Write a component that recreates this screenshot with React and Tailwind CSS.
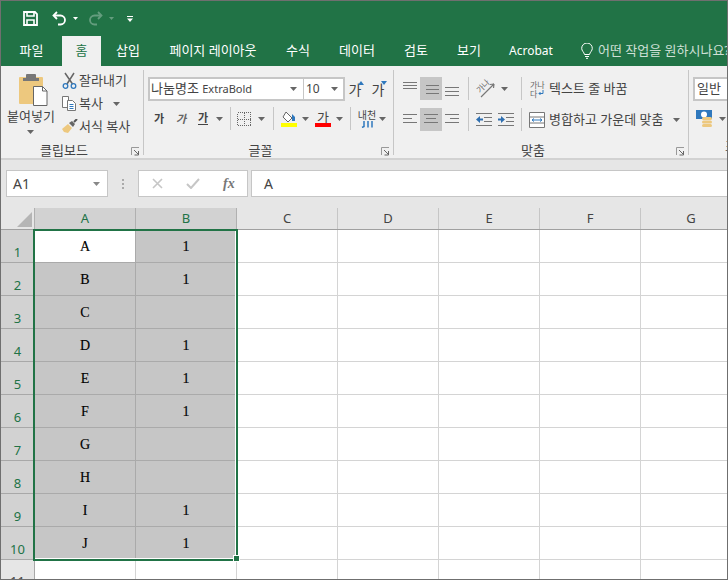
import React from "react";

const GREEN = "#217346";

const rows = [
  ["A", "1"],
  ["B", "1"],
  ["C", ""],
  ["D", "1"],
  ["E", "1"],
  ["F", "1"],
  ["G", ""],
  ["H", ""],
  ["I", "1"],
  ["J", "1"],
];

function Caret({ className = "" }) {
  return (
    <svg width="7" height="4" viewBox="0 0 7 4" className={"shrink-0 " + className}>
      <path d="M0 0h7L3.500 4z" fill="#666" />
    </svg>
  );
}

function Launcher() {
  return (
    <svg width="9" height="9" viewBox="0 0 9 9" className="shrink-0">
      <path d="M.5 8V.5H8" fill="none" stroke="#999" />
      <path d="M3 3l4 4M7.500 4v4h-4" fill="none" stroke="#666" />
    </svg>
  );
}

function Lines({ y, x }) {
  return (
    <svg width="16" height="16" viewBox="0 0 16 16" className="shrink-0">
      {y.map((v, i) => (
        <rect key={i} x={x[i]} y={v} width={x[i + 3]} height="1" fill="#777" />
      ))}
    </svg>
  );
}

function AlignCell({ active, w, lines, mt = "mt-0" }) {
  return (
    <div
      className={
        "flex h-[23px] items-center justify-center " +
        (active ? "bg-[#c6c6c6] " : "") +
        (w === 23 ? "w-[23px]" : "w-[22px]")
      }
    >
      <div className={mt}>
        <Lines y={lines.y} x={lines.x} />
      </div>
    </div>
  );
}

function VSep({ h = "h-[23px]", mx = "mx-0" }) {
  return <div className={"w-px shrink-0 bg-[#c6c6c6] " + h + " " + mx} />;
}

function Indent({ flip }) {
  return (
    <svg width="16" height="13" viewBox="0 0 16 13" className="shrink-0">
      <rect x="0" y="0" width="16" height="1" fill="#777" />
      <rect x="8" y="4" width="8" height="1" fill="#777" />
      <rect x="8" y="8" width="8" height="1" fill="#777" />
      <rect x="0" y="12" width="16" height="1" fill="#777" />
      <path d={flip ? "M0 5.500h3V3l4 3.500L3 10V7.500H0z" : "M7 5.500H4V3L0 6.500 4 10V7.500h3z"} fill="#2f6fb0" />
    </svg>
  );
}

function RibbonLabel({ children, className = "" }) {
  return (
    <div className={"-mb-[5px] mt-auto flex h-[18px] items-center pr-[3px] text-[13px] text-[#444] " + className}>
      <div className="mr-[4px] flex-1 text-center">{children}</div>
      <Launcher />
    </div>
  );
}

function ClipRow({ icon, label, caret }) {
  return (
    <div className="flex h-[23px] items-center text-[13px] text-[#444]">
      <div className="flex w-[19px] justify-center">{icon}</div>
      <span>{label}</span>
      {caret && <Caret className="ml-[10px]" />}
    </div>
  );
}

function Clipboard() {
  return (
    <div className="flex h-[85px] w-[143px] shrink-0 flex-col border-r border-[#c6c6c6]">
      <div className="flex pl-[6px]">
        <div className="flex w-[54px] flex-col text-[13px] text-[#444]">
          <svg width="30" height="32" viewBox="0 0 30 32" className="ml-[12px] mt-[4px]">
            <rect x="0" y="3" width="24" height="27" rx="1" fill="#edc87e" />
            <rect x="7" y="0" width="10" height="6" rx="1" fill="#777" />
            <rect x="4" y="4" width="16" height="3" fill="#777" />
            <path d="M14.500 12.500h9l4.500 4.500v14.500H14.500z" fill="#fff" stroke="#666" />
            <path d="M23.500 12.500v4.500H28" fill="none" stroke="#666" />
          </svg>
          <span className="leading-[20px]">붙여넣기</span>
          <Caret className="ml-[20px] mt-[4px]" />
        </div>
        <div className="-ml-[1px] -mt-[1px] flex flex-col">
          <ClipRow
            label="잘라내기"
            icon={
              <svg width="16" height="17" viewBox="0 0 16 17">
                <path d="M3 1l7.500 11M12 1L5 12" fill="none" stroke="#666" strokeWidth="1.500" />
                <circle cx="3.500" cy="14" r="2.300" fill="none" stroke="#2f78bd" strokeWidth="1.300" />
                <circle cx="11.500" cy="14" r="2.300" fill="none" stroke="#2f78bd" strokeWidth="1.300" />
              </svg>
            }
          />
          <ClipRow
            label="복사"
            caret
            icon={
              <svg width="15" height="15" viewBox="0 0 15 15">
                <path d="M.5.500h6v11h-6z" fill="#fff" stroke="#777" />
                <path d="M5.500 4.500h5l3 3v7h-8z" fill="#fff" stroke="#777" />
                <path d="M7.500 8.500h4M7.500 10.500h4M7.500 12.500h4" stroke="#2f78bd" />
              </svg>
            }
          />
          <ClipRow
            label="서식 복사"
            icon={
              <svg width="17" height="15" viewBox="0 0 17 15">
                <path d="M1 10l6-5 4 4-4 5-4-1z" fill="#edc87e" />
                <path d="M8 4l3-2 3 3-2 3z" fill="#666" />
                <path d="M13 3l3-3" stroke="#555" strokeWidth="2" />
              </svg>
            }
          />
        </div>
      </div>
      <RibbonLabel>클립보드</RibbonLabel>
    </div>
  );
}

function KoCell({ extra = "", children }) {
  return (
    <div className="flex w-[22px] shrink-0 justify-center">
      <span className={"text-[11px] leading-none text-[#444] " + extra}>{children}</span>
    </div>
  );
}

function FontGroup() {
  return (
    <div className="flex h-[85px] w-[250px] shrink-0 flex-col border-r border-[#c6c6c6] pl-[4px] pt-[7px]">
      <div className="flex h-[24px] items-center">
        <div className="flex h-[24px] w-[157px] shrink-0 items-center justify-between border-2 border-[#c6c6c6] bg-white pl-[1px] pr-[6px] text-[13px] text-[#444]">
          <span className="whitespace-nowrap">
            나눔명조 <span className="text-[11px]">ExtraBold</span>
          </span>
          <Caret />
        </div>
        <div className="-ml-[1px] flex h-[24px] w-[41px] shrink-0 items-center justify-between border-2 border-l-0 border-[#c6c6c6] bg-white pl-[2px] pr-[5px] text-[12px] text-[#444]">
          <span>10</span>
          <Caret />
        </div>
        <div className="flex w-[23px] shrink-0 items-start justify-center">
          <span className="mt-[2px] text-[14px] leading-none text-[#444]">가</span>
          <svg width="6" height="4" viewBox="0 0 6 4" className="-ml-[3px]">
            <path d="M3 0l3 4H0z" fill="#2f78bd" />
          </svg>
        </div>
        <div className="flex w-[23px] shrink-0 items-start justify-center">
          <span className="mt-[2px] text-[14px] leading-none text-[#444]">가</span>
          <svg width="6" height="4" viewBox="0 0 6 4" className="-ml-[3px]">
            <path d="M3 4l3-4H0z" fill="#2f78bd" />
          </svg>
        </div>
      </div>
      <div className="mt-[6px] flex h-[23px] items-center">
        <KoCell extra="font-bold">가</KoCell>
        <KoCell extra="italic font-bold text-[#666]">가</KoCell>
        <KoCell extra="border-b border-[#444] pb-[1px] font-bold">가</KoCell>
        <Caret className="ml-[2px]" />
        <VSep mx="ml-[7px]" />
        <svg width="14" height="14" viewBox="0 0 14 14" shapeRendering="crispEdges" className="ml-[6px] shrink-0">
          <path
            d="M.5.500h13v13H.500zM7.500 .5v13M.5 7.500h13"
            fill="none"
            stroke="#666"
            strokeDasharray="1 1"
          />
        </svg>
        <Caret className="ml-[7px]" />
        <VSep mx="ml-[8px]" />
        <div className="ml-[7px] flex w-[16px] shrink-0 flex-col items-center">
          <svg width="16" height="12" viewBox="0 0 16 12">
            <path d="M5 1l6 6-4 4-5-5z" fill="#fff" stroke="#666" />
            <path d="M11 3l3 3v4h-3z" fill="#2f78bd" />
          </svg>
          <div className="h-[4px] w-[16px] bg-[#ffff00]" />
        </div>
        <Caret className="ml-[5px]" />
        <div className="ml-[6px] flex w-[16px] shrink-0 flex-col items-center">
          <span className="text-[13px] leading-[12px] text-[#444]">가</span>
          <div className="h-[4px] w-[16px] bg-[#ff0000]" />
        </div>
        <Caret className="ml-[5px]" />
        <VSep mx="ml-[7px]" />
        <div className="ml-[5px] flex w-[22px] shrink-0 flex-col items-center leading-none">
          <span className="text-[10px] leading-[11px] text-[#444]">내천</span>
          <svg width="13" height="7" viewBox="0 0 13 7">
            <path d="M3 0v5.500L1 6.500M7 0v6.500M11 0v6.500" fill="none" stroke="#2f78bd" strokeWidth="1.500" />
          </svg>
        </div>
        <Caret className="ml-[1px]" />
      </div>
      <RibbonLabel className="-ml-[4px]">글꼴</RibbonLabel>
    </div>
  );
}

function AlignGroup() {
  return (
    <div className="flex h-[85px] w-[295px] shrink-0 flex-col border-r border-[#c6c6c6] pl-[3px] pt-[7px]">
      <div className="flex h-[23px]">
        <AlignCell w={23} mt="-mt-[5px]" lines={{ y: [4, 7, 10], x: [2, 2, 2, 14, 14, 14] }} />
        <AlignCell active w={22} lines={{ y: [4, 8, 12], x: [3, 3, 3, 14, 14, 14] }} />
        <AlignCell w={22} mt="mt-[5px]" lines={{ y: [4, 8, 12], x: [0, 0, 0, 14, 14, 14] }} />
        <VSep mx="ml-[4px]" />
        <div className="flex w-[52px] shrink-0 items-center pl-[6px]">
          <svg width="25" height="22" viewBox="0 0 25 22">
            <text x="3" y="13" fontSize="8" fill="#666" transform="rotate(-45 7 12)">
              가나
            </text>
            <path d="M6 19L19 6M19 6l-4 .5M19 6l-.5 4" fill="none" stroke="#777" strokeWidth="1.200" />
          </svg>
          <Caret className="ml-[1px]" />
        </div>
        <VSep />
        <div className="flex items-center pl-[8px] text-[13px] text-[#444]">
          <div className="mr-[4px] w-[15px] text-[8px] leading-[9px] text-[#666]">
            <div>가나</div>
            <div className="flex items-center">
              다
              <svg width="6" height="6" viewBox="0 0 6 6" className="ml-[1px]">
                <path d="M5 0v3.500H1M2.500 2L1 3.500 2.500 5" fill="none" stroke="#2f78bd" />
              </svg>
            </div>
          </div>
          <span className="whitespace-nowrap">텍스트 줄 바꿈</span>
        </div>
      </div>
      <div className="mt-[8px] flex h-[23px]">
        <AlignCell w={23} lines={{ y: [2, 6, 10], x: [2, 2, 2, 14, 9, 14] }} />
        <AlignCell active w={22} lines={{ y: [2, 6, 10], x: [1, 3, 1, 14, 10, 14] }} />
        <AlignCell w={22} lines={{ y: [2, 6, 10], x: [0, 5, 0, 14, 9, 14] }} />
        <VSep mx="ml-[4px]" />
        <div className="flex w-[52px] shrink-0 items-center pl-[7px]">
          <Indent />
          <div className="ml-[6px]">
            <Indent flip />
          </div>
        </div>
        <VSep />
        <div className="flex items-center pl-[7px] text-[13px] text-[#444]">
          <svg width="16" height="16" viewBox="0 0 16 16" className="mr-[4px] shrink-0">
            <path d="M.5.500h15v15H.500zM.5 5h15M.5 11h15" fill="#fff" stroke="#777" />
            <path d="M3 8h10M3 8l2-1.500M3 8l2 1.500M13 8l-2-1.500M13 8l-2 1.500" fill="none" stroke="#2f78bd" />
          </svg>
          <span className="whitespace-nowrap">병합하고 가운데 맞춤</span>
          <Caret className="ml-[10px]" />
        </div>
      </div>
      <RibbonLabel className="-ml-[3px]">맞춤</RibbonLabel>
    </div>
  );
}

function NumberGroup() {
  return (
    <div className="flex h-[85px] min-w-0 flex-1 flex-col overflow-hidden pl-[4px] pt-[7px]">
      <div className="flex h-[24px] shrink-0 items-center border-y-2 border-l-2 border-[#c6c6c6] bg-white pl-[2px] text-[13px] text-[#444]">
        일반
      </div>
      <div className="mt-[9px] flex items-center pl-[3px]">
        <svg width="17" height="17" viewBox="0 0 17 17">
          <rect x="0" y="0" width="16" height="9" fill="#2f78bd" />
          <circle cx="8" cy="4.500" r="3" fill="#fff" />
          <rect x="6" y="7" width="10" height="3" rx="1.500" fill="#edc87e" />
          <rect x="6" y="10.500" width="10" height="3" rx="1.500" fill="#edc87e" />
          <rect x="6" y="14" width="10" height="3" rx="1.500" fill="#edc87e" />
        </svg>
        <Caret className="ml-[6px]" />
      </div>
      <div className="mt-auto h-[18px] whitespace-nowrap pl-[32px] text-[13px] text-[#444]">표시 형식</div>
    </div>
  );
}

function Ribbon() {
  return (
    <div className="flex h-[94px] border-b-2 border-[#d2d2d2] bg-[#f0f0f0] pt-[4px]">
      <Clipboard />
      <FontGroup />
      <AlignGroup />
      <NumberGroup />
    </div>
  );
}

function TitleBar() {
  return (
    <div className="flex h-[35px] items-center pl-[22px]" style={{ backgroundColor: GREEN }}>
      <svg width="15" height="15" viewBox="0 0 15 15">
        <path d="M1 1h11l2 2v11H1z" fill="none" stroke="#fff" strokeWidth="1.800" />
        <path d="M4 1h7v4H4zM4 9h7v5H4z" fill="none" stroke="#fff" strokeWidth="1.600" />
      </svg>
      <svg width="15" height="15" viewBox="0 0 15 15" className="ml-[14px]">
        <path d="M5 1L1.500 4.500 5 8" fill="none" stroke="#fff" strokeWidth="1.800" />
        <path d="M2 4.500h6.500a4 4 0 0 1 0 9H6" fill="none" stroke="#fff" strokeWidth="1.800" />
      </svg>
      <svg width="5" height="3" viewBox="0 0 5 3" className="ml-[6px]">
        <path d="M0 0h5L2.500 3z" fill="#fff" />
      </svg>
      <svg width="15" height="15" viewBox="0 0 15 15" className="ml-[10px] opacity-30">
        <path d="M10 1l3.500 3.500L10 8" fill="none" stroke="#fff" strokeWidth="1.800" />
        <path d="M13 4.500H6.500a4 4 0 0 0 0 9H9" fill="none" stroke="#fff" strokeWidth="1.800" />
      </svg>
      <svg width="5" height="3" viewBox="0 0 5 3" className="ml-[6px] opacity-30">
        <path d="M0 0h5L2.500 3z" fill="#fff" />
      </svg>
      <svg width="6" height="6" viewBox="0 0 6 6" className="ml-[13px]">
        <path d="M0 0h6v1H0zM0 2.500h6L3 6z" fill="#fff" />
      </svg>
    </div>
  );
}

const tabs = [
  ["파일", "w-[61px]"],
  ["홈", "w-[39px]"],
  ["삽입", "w-[54px]"],
  ["페이지 레이아웃", "w-[116px]"],
  ["수식", "w-[54px]"],
  ["데이터", "w-[64px]"],
  ["검토", "w-[54px]"],
  ["보기", "w-[52px]"],
  ["Acrobat", "w-[72px] text-[12px]"],
];

function TabBar() {
  return (
    <div className="flex h-[30px] overflow-hidden text-[13px]" style={{ backgroundColor: GREEN }}>
      {tabs.map(([name, w]) => (
        <div
          key={name}
          className={
            "flex shrink-0 items-center justify-center " +
            w +
            (name === "홈" ? " bg-[#f0f0f0] text-[#217346]" : " text-white")
          }
        >
          {name}
        </div>
      ))}
      <div className="flex shrink-0 items-center whitespace-nowrap pl-[14px] text-[#cfe0d6]">
        <svg width="12" height="16" viewBox="0 0 12 16" className="mr-[5px]">
          <path
            d="M3.500 11.500C3 9 .7 8 .7 5.300a5.300 5.300 0 0 1 10.600 0C11.300 8 9 9 8.500 11.500zM4 13.500h4M5 15.300h2"
            fill="none"
            stroke="#fff"
          />
        </svg>
        어떤 작업을 원하시나요?
      </div>
    </div>
  );
}

function FormulaBar() {
  return (
    <div className="flex h-[48px] bg-[#e6e6e6] pt-[10px]">
      <div className="ml-[5px] flex h-[27px] w-[102px] items-center justify-between border border-[#c6c6c6] bg-white pl-[6px] pr-[7px] text-[14px] text-[#444]">
        <span>A1</span>
        <svg width="7" height="4" viewBox="0 0 7 4">
          <path d="M0 0h7L3.500 4z" fill="#888" />
        </svg>
      </div>
      <div className="flex h-[27px] w-[30px] flex-col items-center justify-center gap-[2px]">
        <div className="h-[2px] w-[2px] bg-[#aaa]" />
        <div className="h-[2px] w-[2px] bg-[#aaa]" />
        <div className="h-[2px] w-[2px] bg-[#aaa]" />
      </div>
      <div className="flex h-[27px] w-[110px] items-center border border-[#c6c6c6] bg-white pl-[13px]">
        <svg width="11" height="11" viewBox="0 0 11 11">
          <path d="M1 1l9 9M10 1l-9 9" stroke="#c6c6c6" strokeWidth="1.600" />
        </svg>
        <svg width="14" height="11" viewBox="0 0 14 11" className="ml-[23px]">
          <path d="M1 6l4 4 8-9" fill="none" stroke="#c6c6c6" strokeWidth="2" />
        </svg>
        <span className="ml-[23px] font-['Liberation_Serif',serif] text-[14px] font-bold italic text-[#777]">
          fx
        </span>
      </div>
      <div className="ml-[3px] flex h-[27px] flex-1 items-center border-y border-l border-[#c6c6c6] bg-white pl-[12px] text-[14px] text-[#444]">
        A
      </div>
    </div>
  );
}

const columns = ["A", "B", "C", "D", "E", "F", "G"];

function ColumnHeader() {
  return (
    <div className="flex h-[22px] border-b border-[#a0a0a0] bg-[#e6e6e6] text-[13px]">
      <div className="flex w-[34px] shrink-0 items-end justify-end border-r border-[#b0b0b0] pb-[2px] pr-[2px]">
        <svg width="15" height="15" viewBox="0 0 15 15">
          <path d="M15 0v15H0z" fill="#b5b5b5" />
        </svg>
      </div>
      {columns.map((c, i) => (
        <div
          key={c}
          className={
            "flex w-[101px] shrink-0 items-center justify-center border-r " +
            (i < 2 ? "border-[#b0b0b0] bg-[#d2d2d2] text-[#217346]" : "border-[#c6c6c6] text-[#444]")
          }
        >
          {c}
        </div>
      ))}
    </div>
  );
}

function Row({ num, a, b, first }) {
  return (
    <div className="flex h-[33px]">
      <div className="flex w-[34px] shrink-0 items-end justify-center border-b border-r border-[#a8a8a8] bg-[#d2d2d2] pb-[2px] text-[13px] leading-[16px] text-[#217346]">
        {num}
      </div>
      <div
        className={
          "flex w-[101px] shrink-0 items-center justify-center border-b border-r border-[#aaaaaa] font-['Liberation_Serif',serif] text-[14px] text-black [-webkit-text-stroke:0.15px_black] " +
          (first ? "bg-white" : "bg-[#c6c6c6]")
        }
      >
        {a}
      </div>
      <div className="flex w-[101px] shrink-0 items-center justify-center border-b border-r border-[#aaaaaa] bg-[#c6c6c6] font-['Liberation_Serif',serif] text-[14px] text-black [-webkit-text-stroke:0.15px_black]">
        {b}
      </div>
      {[0, 1, 2, 3, 4].map((i) => (
        <div key={i} className="w-[101px] shrink-0 border-b border-r border-[#d4d4d4] bg-white" />
      ))}
    </div>
  );
}

function Sheet() {
  return (
    <div className="relative flex-1 overflow-hidden">
      <ColumnHeader />
      {rows.map(([a, b], i) => (
        <Row key={a} num={i + 1} a={a} b={b} first={i === 0} />
      ))}
      <div className="flex h-[33px]">
        <div className="flex w-[34px] shrink-0 items-end justify-center border-r border-[#a8a8a8] bg-[#e6e6e6] pb-[4px] text-[13px] leading-[16px] text-[#444]">
          11
        </div>
        {columns.map((c) => (
          <div key={c} className="w-[101px] shrink-0 border-r border-[#d4d4d4] bg-white" />
        ))}
      </div>
      <div className="pointer-events-none absolute left-[32px] top-[21px] h-[332px] w-[205px] border-2 border-[#217346]">
        <div className="h-full w-full border-b border-r border-white" />
      </div>
      <div className="absolute left-[233px] top-[348px] h-[5px] w-[5px] bg-[#217346] outline outline-1 outline-white" />
    </div>
  );
}

export default function App() {
  return (
    <div className="flex h-[580px] w-[728px] flex-col overflow-hidden border border-[#6f6f6f] bg-white font-['Noto_Sans','Noto_Sans_CJK_KR',sans-serif]">
      <TitleBar />
      <TabBar />
      <Ribbon />
      <FormulaBar />
      <Sheet />
    </div>
  );
}
